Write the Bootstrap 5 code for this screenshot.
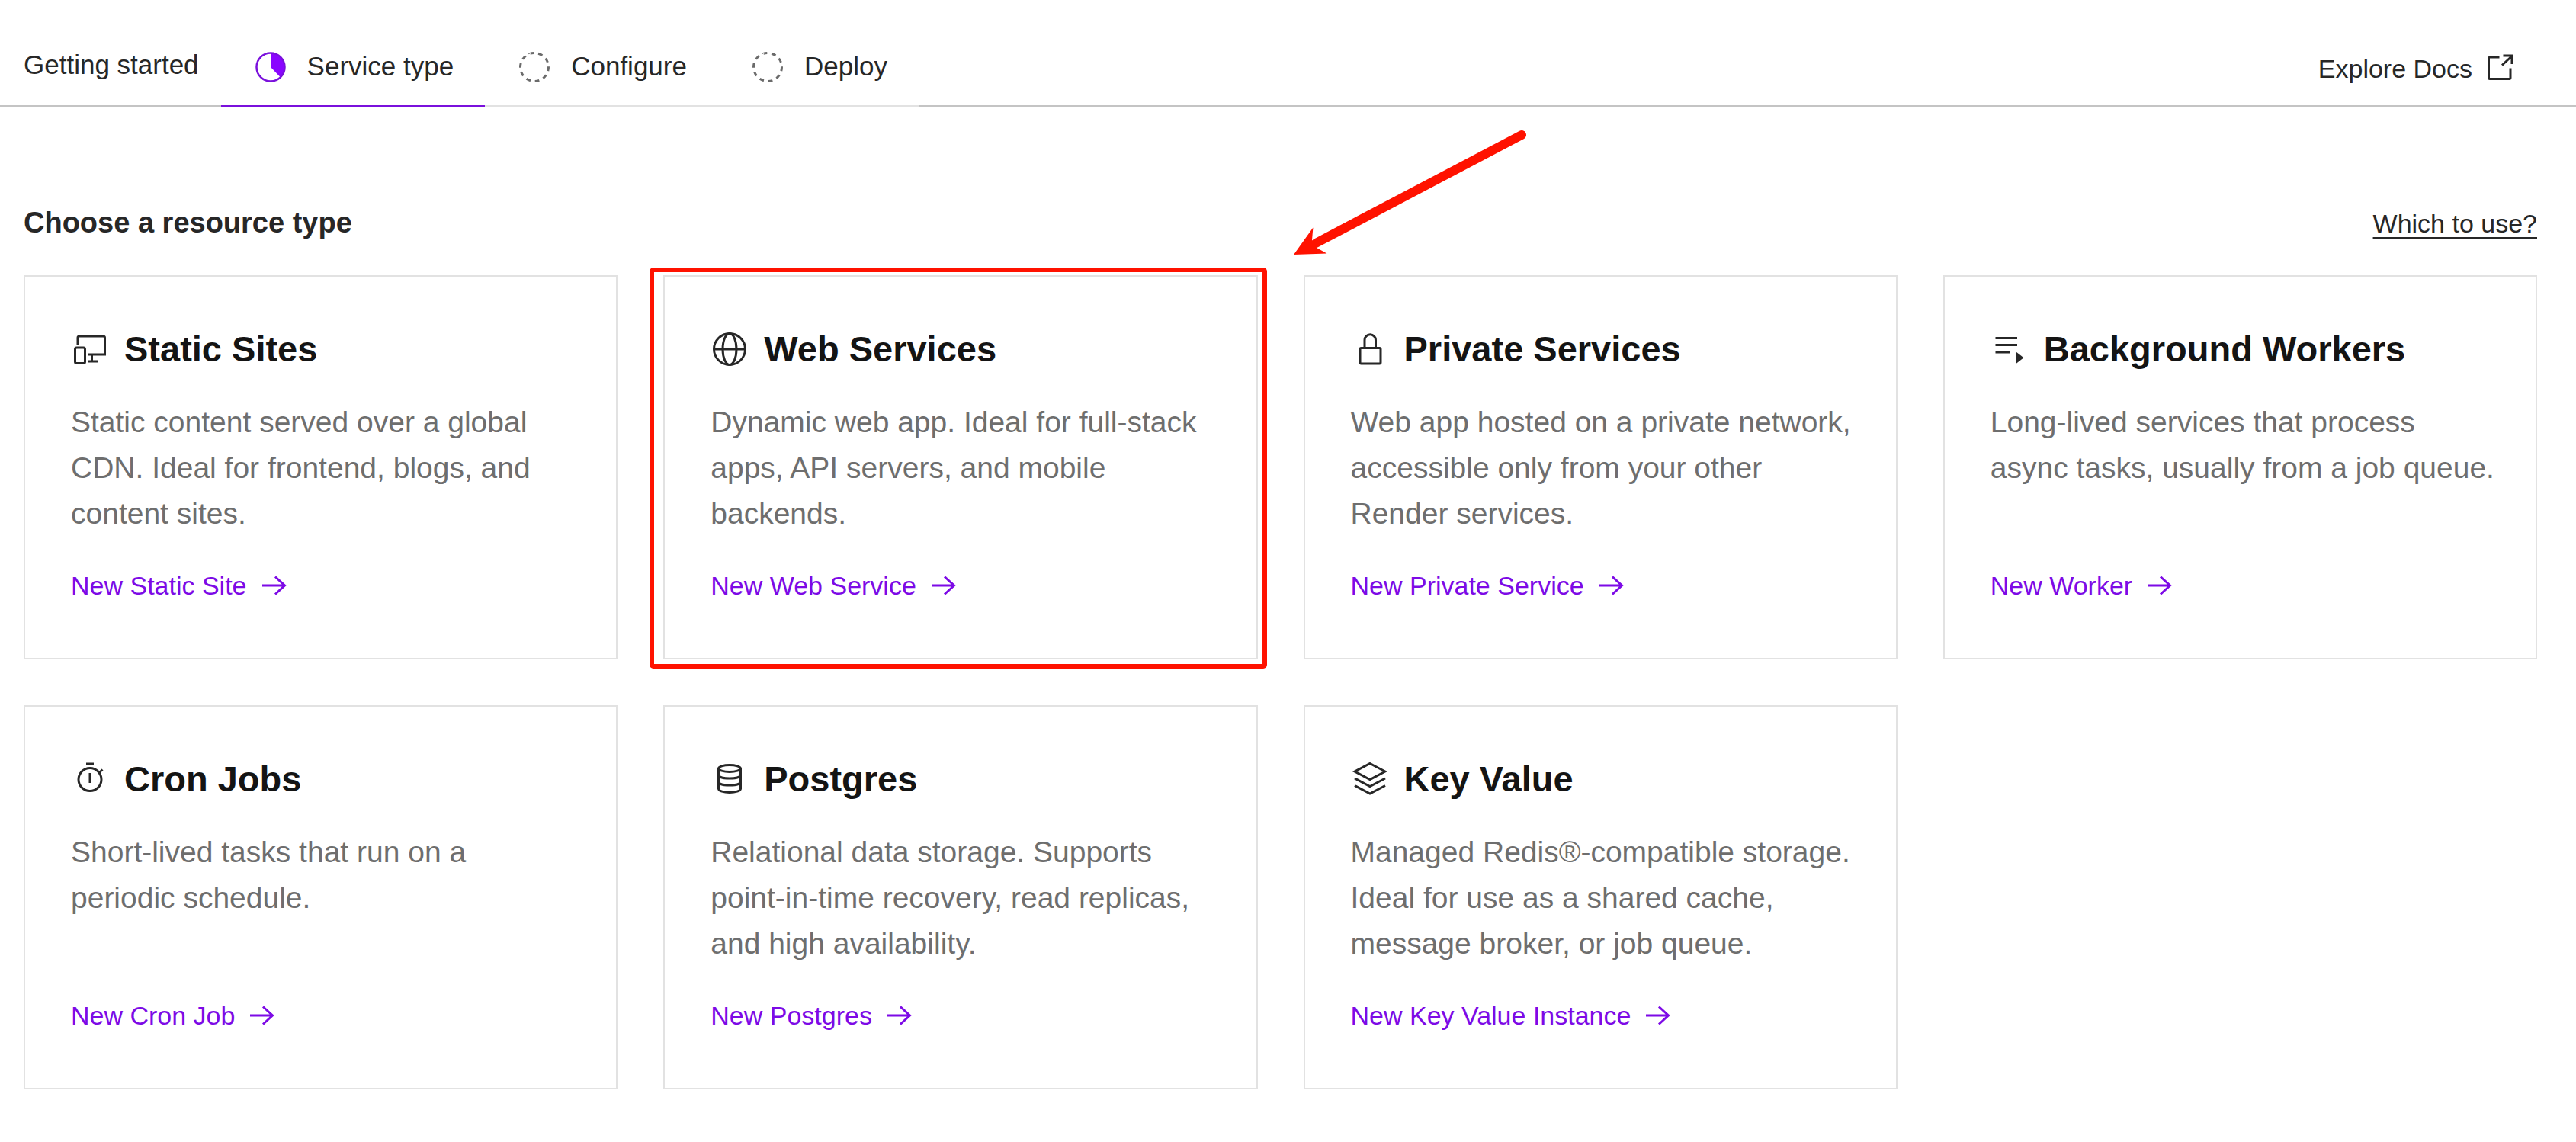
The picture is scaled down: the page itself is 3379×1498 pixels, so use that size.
<!DOCTYPE html>
<html lang="en">
<head>
<meta charset="utf-8">
<meta name="viewport" content="width=device-width, initial-scale=1">
<title>Choose a resource type</title>
<link href="https://cdn.jsdelivr.net/npm/bootstrap@5.3.0/dist/css/bootstrap.min.css" rel="stylesheet">
<style>
  body { font-family: "Liberation Sans", Arial, sans-serif; color: #272727; background: #fff; }
  a { color: inherit; text-decoration: none; }
  svg { flex: none; fill: none; stroke: currentColor; }

  /* top bar: each section carries its own piece of the bottom rule */
  .topbar { font-size: 35px; line-height: 48px; white-space: nowrap; }
  .topbar > * { border-bottom: 2px solid #c4c4c4; }
  .start-link { padding: 61px 29px 29px 31px; }
  .topbar > .steps { border: 0; }
  .step { gap: 24px; padding: 63px 41px 27px; border-bottom: 2px solid #e2e2e2; }
  .step.active { border-color: #7a10dc; }
  .step svg { width: 48px; height: 48px; color: #6b6b6b; }
  .step.active svg { color: #7a10dc; }
  .docs-link { font-size: 34px; gap: 20px; padding: 66px 82px 24px 30px; }

  .page { padding: 128px 51px 60px 31px; }
  .page-title { font-size: 38px; line-height: 48px; font-weight: 700; }
  .page-head { margin-bottom: 45px; }
  .which-link { font-size: 34px; line-height: 38px; text-decoration: underline; text-decoration-thickness: 3px; text-underline-offset: 6px; }

  .resources { --bs-gutter-x: 60px; --bs-gutter-y: 60px; }
  .resource { border: 2px solid #e2e2e2; border-radius: 0; padding: 65px 44px 75px 60px; color: #272727; }
  .resource h2 { font-size: 47px; line-height: 60px; font-weight: 700; color: #141414; margin-bottom: 36px; gap: 22px; }
  .resource h2 svg { width: 48px; height: 48px; stroke-width: 3; color: #272727; }
  .resource p { font-size: 39px; line-height: 60px; min-height: 180px; color: #6e6e6e; margin-bottom: 44px; }
  .resource a { font-size: 34px; line-height: 40px; color: #7d0ae6; gap: 20px; }
  .resource a svg { width: 32px; height: 26px; stroke-width: 3; }

  .highlight { position: absolute; inset: -12px -14px -14px -20px; border: 6px solid #ff1200; border-radius: 5px; pointer-events: none; }
  .pointer { position: absolute; left: -22px; top: -198px; width: 320px; height: 176px; color: #ff1200; pointer-events: none; z-index: 1; }
</style>
</head>
<body>
<header class="topbar d-flex align-items-stretch">
  <a class="start-link" href="#">Getting started</a>
  <nav class="steps d-flex" aria-label="Progress">
    <a class="step active d-flex align-items-center" href="#" aria-current="step">
      <svg viewBox="0 0 48 48" aria-hidden="true"><path d="M24 25V6.500A18.500 18.500 0 0 1 37 38.500Z" fill="#8a05ff" stroke="none"/><circle cx="24" cy="25" r="18.500" stroke-width="2.500"/></svg>
      Service type</a>
    <a class="step d-flex align-items-center" href="#">
      <svg viewBox="0 0 48 48" aria-hidden="true"><circle cx="24" cy="25" r="18.500" stroke-width="3" pathLength="100" stroke-dasharray="5 5" transform="rotate(-110 24 25)"/></svg>
      Configure</a>
    <a class="step d-flex align-items-center" href="#">
      <svg viewBox="0 0 48 48" aria-hidden="true"><circle cx="24" cy="25" r="18.500" stroke-width="3" pathLength="100" stroke-dasharray="5 5" transform="rotate(-110 24 25)"/></svg>
      Deploy</a>
  </nav>
  <div class="flex-grow-1"></div>
  <a class="docs-link d-flex align-items-center" href="#">Explore Docs
    <svg width="34" height="38" viewBox="0 0 34 38" stroke-width="3" aria-hidden="true"><path d="M15.500 4H3a1.500 1.500 0 0 0-1.500 1.500V31A1.500 1.500 0 0 0 3 32.500H28.500A1.500 1.500 0 0 0 30 31V18.500M20.500 2H32V13M32 2.500 19 14.500"/></svg>
  </a>
</header>

<main class="page">
  <div class="page-head d-flex justify-content-between align-items-baseline">
    <h1 class="page-title mb-0">Choose a resource type</h1>
    <a class="which-link" href="#">Which to use?</a>
  </div>

  <div class="resources row row-cols-1 row-cols-md-2 row-cols-xl-4">
    <div class="col">
      <article class="resource card h-100">
        <h2 class="d-flex align-items-center"><svg viewBox="0 0 48 48" aria-hidden="true"><path d="M9 18V9a2 2 0 0 1 2-2H42.500a2 2 0 0 1 2 2V31H22M27.500 31V40M22 40H35"/><rect x="5.500" y="22" width="13" height="20.500" rx="2"/></svg>Static Sites</h2>
        <p>Static content served over a global CDN. Ideal for frontend, blogs, and content sites.</p>
        <a class="d-flex align-items-center mt-auto" href="#">New Static Site <svg viewBox="0 0 32 26" aria-hidden="true"><path d="M0 13H30M17 1.500 29.500 13 17 24.500"/></svg></a>
      </article>
    </div>
    <div class="col">
      <article class="resource card h-100">
        <h2 class="d-flex align-items-center"><svg viewBox="0 0 48 48" aria-hidden="true"><circle cx="25" cy="24" r="20.500"/><ellipse cx="25" cy="24" rx="9" ry="20.500"/><path d="M4.500 24H45.500"/></svg>Web Services</h2>
        <p>Dynamic web app. Ideal for full-stack apps, API servers, and mobile backends.</p>
        <a class="d-flex align-items-center mt-auto" href="#">New Web Service <svg viewBox="0 0 32 26" aria-hidden="true"><path d="M0 13H30M17 1.500 29.500 13 17 24.500"/></svg></a>
        <div class="highlight"></div>
      </article>
    </div>
    <div class="col">
      <article class="resource card h-100">
        <h2 class="d-flex align-items-center"><svg viewBox="0 0 48 48" aria-hidden="true"><rect x="12" y="22.500" width="27" height="20.500" rx="1.500"/><path d="M18 22.500V12a7.250 7.250 0 0 1 14.500 0V22.500"/></svg>Private Services</h2>
        <p>Web app hosted on a private network, accessible only from your other Render services.</p>
        <a class="d-flex align-items-center mt-auto" href="#">New Private Service <svg viewBox="0 0 32 26" aria-hidden="true"><path d="M0 13H30M17 1.500 29.500 13 17 24.500"/></svg></a>
        <svg class="pointer" viewBox="0 0 320 176" aria-hidden="true"><path d="M306 12 36 154" stroke-width="12" stroke-linecap="round"/><path d="M7 169 32.400 133.500 31 150 37 160 50.500 167.500Z" fill="currentColor" stroke="none"/></svg>
      </article>
    </div>
    <div class="col">
      <article class="resource card h-100">
        <h2 class="d-flex align-items-center"><svg viewBox="0 0 48 48" aria-hidden="true"><path d="M6.500 9.500H35M6.500 18.500H35M6.500 28H25.500"/><path d="M33.500 27.500V43L43.500 35.200Z" fill="currentColor" stroke="none"/></svg>Background Workers</h2>
        <p>Long-lived services that process<br>async tasks, usually from a job queue.</p>
        <a class="d-flex align-items-center mt-auto" href="#">New Worker <svg viewBox="0 0 32 26" aria-hidden="true"><path d="M0 13H30M17 1.500 29.500 13 17 24.500"/></svg></a>
      </article>
    </div>
    <div class="col">
      <article class="resource card h-100">
        <h2 class="d-flex align-items-center"><svg viewBox="0 0 48 48" aria-hidden="true"><circle cx="25" cy="24.500" r="15"/><path d="M20 4H30M25 16V29M36 16.500 41.500 11.500"/></svg>Cron Jobs</h2>
        <p>Short-lived tasks that run on a<br>periodic schedule.</p>
        <a class="d-flex align-items-center mt-auto" href="#">New Cron Job <svg viewBox="0 0 32 26" aria-hidden="true"><path d="M0 13H30M17 1.500 29.500 13 17 24.500"/></svg></a>
      </article>
    </div>
    <div class="col">
      <article class="resource card h-100">
        <h2 class="d-flex align-items-center"><svg viewBox="0 0 48 48" aria-hidden="true"><ellipse cx="25" cy="10" rx="14.500" ry="4.500"/><path d="M10.500 10V36.500C10.500 43 39.500 43 39.500 36.500V10M10.500 18.500C10.500 24.500 39.500 24.500 39.500 18.500M10.500 27.500C10.500 33.500 39.500 33.500 39.500 27.500"/></svg>Postgres</h2>
        <p>Relational data storage. Supports point-in-time recovery, read replicas, and high availability.</p>
        <a class="d-flex align-items-center mt-auto" href="#">New Postgres <svg viewBox="0 0 32 26" aria-hidden="true"><path d="M0 13H30M17 1.500 29.500 13 17 24.500"/></svg></a>
      </article>
    </div>
    <div class="col">
      <article class="resource card h-100">
        <h2 class="d-flex align-items-center"><svg viewBox="0 0 48 48" aria-hidden="true"><path d="M25 3.500 45 14 25 24.500 5 14ZM5 23 25 33.500 45 23M5 32.500 25 43 45 32.500"/></svg>Key Value</h2>
        <p>Managed Redis®-compatible storage. Ideal for use as a shared cache, message broker, or job queue.</p>
        <a class="d-flex align-items-center mt-auto" href="#">New Key Value Instance <svg viewBox="0 0 32 26" aria-hidden="true"><path d="M0 13H30M17 1.500 29.500 13 17 24.500"/></svg></a>
      </article>
    </div>
  </div>
</main>
<script src="https://cdn.jsdelivr.net/npm/bootstrap@5.3.0/dist/js/bootstrap.bundle.min.js"></script>
</body>
</html>
